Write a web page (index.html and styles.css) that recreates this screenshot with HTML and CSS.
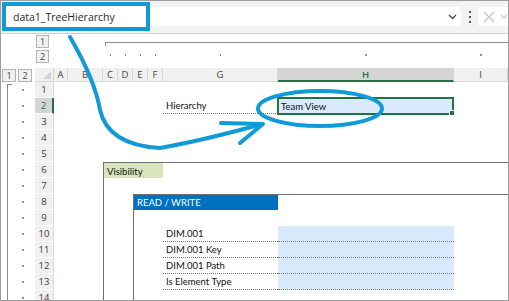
FILE: index.html
```html
<!DOCTYPE html>
<html>
<head>
<meta charset="utf-8">
<link rel="stylesheet" href="styles.css">
</head>
<body>
<div class="frame">
  <div class="topbar">
    <div class="namebox">data1_TreeHierarchy</div>
    <div class="formula">
      <svg class="chev" width="9" height="6" viewBox="0 0 9 6"><polyline points="1,1 4.5,4.5 8,1" fill="none" stroke="#444" stroke-width="1.3"/></svg>
    </div>
    <div class="vdots"><i></i><i></i><i></i></div>
    <div class="cancel">
      <svg width="12" height="12" viewBox="0 0 12 12"><path d="M1 1 L11 11 M11 1 L1 11" stroke="#c4c4c4" stroke-width="1.2"/></svg>
      <svg class="cv2" width="8" height="6" viewBox="0 0 8 6"><polyline points="1,1 4,4 7,1" fill="none" stroke="#c4c4c4" stroke-width="1.2"/></svg>
    </div>
  </div>

  <div class="sheet">
    <!-- outline row -->
    <div class="lvl-col"><span class="lvl">1</span><span class="lvl">2</span></div>
    <div class="col-bracket"></div>
    <div class="cdot c5"></div><div class="cdot c6"></div><div class="cdot c7"></div><div class="cdot c8"></div>
    <div class="cdot c9"></div><div class="cdot c10"></div><div class="cdot c11"></div>

    <!-- header row -->
    <div class="lvl-row"><span class="lvl">1</span><span class="lvl">2</span></div>
    <div class="corner"><span class="tri"></span></div>
    <div class="ch c3">A</div>
    <div class="ch c4">B</div>
    <div class="ch c5">C</div>
    <div class="ch c6">D</div>
    <div class="ch c7">E</div>
    <div class="ch c8">F</div>
    <div class="ch c9">G</div>
    <div class="ch c10 sel">H</div>
    <div class="ch c11">I</div>

    <!-- row outline -->
    <div class="row-bracket"></div>
    <div class="rdot r1"></div><div class="rdot r2"></div><div class="rdot r3"></div><div class="rdot r4"></div>
    <div class="rdot r5"></div><div class="rdot r6"></div><div class="rdot r7"></div><div class="rdot r8"></div>
    <div class="rdot r9"></div><div class="rdot r10"></div><div class="rdot r11"></div><div class="rdot r12"></div>
    <div class="rdot r13"></div><div class="rdot r14"></div>

    <!-- row headers -->
    <div class="rh r1">1</div>
    <div class="rh r2 sel">2</div>
    <div class="rh r3">3</div>
    <div class="rh r4">4</div>
    <div class="rh r5">5</div>
    <div class="rh r6">6</div>
    <div class="rh r7">7</div>
    <div class="rh r8">8</div>
    <div class="rh r9">9</div>
    <div class="rh r10">10</div>
    <div class="rh r11">11</div>
    <div class="rh r12">12</div>
    <div class="rh r13">13</div>
    <div class="rh r14">14</div>

    <!-- content -->
    <div class="cell lbl r2">Hierarchy</div>
    <div class="cell val active r2">Team View</div>

    <div class="box-outer"></div>
    <div class="cell vis">Visibility</div>

    <div class="box-inner"></div>
    <div class="cell rw">READ / WRITE</div>

    <div class="cell lbl r10">DIM.001</div>
    <div class="cell val r10"></div>
    <div class="cell lbl r11">DIM.001 Key</div>
    <div class="cell val r11"></div>
    <div class="cell lbl r12">DIM.001 Path</div>
    <div class="cell val r12"></div>
    <div class="cell lbl r13">Is Element Type</div>
    <div class="cell val r13"></div>
  </div>

  <svg class="annot" width="509" height="301" viewBox="0 0 509 301">
    <g fill="none" stroke="#119ad8" stroke-width="4" stroke-linecap="round" stroke-linejoin="round">
      <path d="M70 37 Q95 80 100 110 Q108 145 160 148 Q205 140 262 124"/>
      <polyline points="221,123 263,124 240,143"/>
      <ellipse cx="320" cy="108.5" rx="62" ry="17.5"/>
    </g>
  </svg>
</div>
</body>
</html>
```

FILE: styles.css
```css
html, body {
  margin: 0;
  padding: 0;
  background: #ffffff;
}

.frame {
  width: 509px;
  height: 301px;
  box-sizing: border-box;
  border: 1px solid #9d9d9d;
  position: relative;
  overflow: hidden;
  background: #ffffff;
  font-family: "Lato", "Liberation Sans", sans-serif;
}

/* ---------- formula bar ---------- */
.topbar {
  height: 33px;
  box-sizing: border-box;
  background: #f3f3f3;
  border-bottom: 1px solid #cfcfcf;
  display: flex;
  align-items: flex-start;
}

.namebox {
  margin: 1px 0 0 1px;
  width: 149px;
  height: 29px;
  box-sizing: border-box;
  border: 4px solid #119ad8;
  background: #ffffff;
  font-family: "Open Sans", "Liberation Sans", sans-serif;
  font-size: 10.5px;
  color: #2a2a2a;
  padding-left: 7px;
  display: flex;
  align-items: center;
}

.formula {
  margin: 6px 0 0 1px;
  width: 311px;
  height: 19px;
  background: #ffffff;
  border-radius: 3px;
  display: flex;
  align-items: center;
  justify-content: flex-end;
  padding-right: 4px;
  box-sizing: border-box;
}

.vdots {
  margin-top: 10px;
  width: 17px;
  height: 12px;
  display: flex;
  flex-direction: column;
  align-items: center;
  justify-content: space-between;
}
.vdots i {
  display: block;
  width: 2px;
  height: 2px;
  background: #555555;
}

.cancel {
  margin-top: 6px;
  flex: 1;
  height: 19px;
  background: #ffffff;
  border-radius: 3px 0 0 3px;
  display: flex;
  align-items: center;
  padding-left: 5px;
  gap: 5px;
}

/* ---------- sheet grid ---------- */
.sheet {
  display: grid;
  grid-template-columns: 34px 19px 14px 35px 15px 15px 15px 15px 115px 176px 1fr;
  grid-template-rows: 34px 14px repeat(14, 16px);
  font-size: 10px;
}

.c3 { grid-column: 3; }
.c4 { grid-column: 4; }
.c5 { grid-column: 5; }
.c6 { grid-column: 6; }
.c7 { grid-column: 7; }
.c8 { grid-column: 8; }
.c9 { grid-column: 9; }
.c10 { grid-column: 10; }
.c11 { grid-column: 11; }

.r1 { grid-row: 3; }
.r2 { grid-row: 4; }
.r3 { grid-row: 5; }
.r4 { grid-row: 6; }
.r5 { grid-row: 7; }
.r6 { grid-row: 8; }
.r7 { grid-row: 9; }
.r8 { grid-row: 10; }
.r9 { grid-row: 11; }
.r10 { grid-row: 12; }
.r11 { grid-row: 13; }
.r12 { grid-row: 14; }
.r13 { grid-row: 15; }
.r14 { grid-row: 16; }

/* outline level buttons */
.lvl {
  display: flex;
  align-items: center;
  justify-content: center;
  width: 13px;
  height: 13px;
  box-sizing: border-box;
  border: 1px solid #b4b4b4;
  background: #f1f1f1;
  font-family: "Open Sans", sans-serif;
  font-size: 9px;
  color: #444444;
}
.lvl-col {
  grid-column: 2;
  grid-row: 1;
  display: flex;
  flex-direction: column;
  gap: 2px;
  padding: 1px 0 0 1px;
}
.lvl-row {
  grid-column: 1;
  grid-row: 2;
  display: flex;
  gap: 2px;
  padding: 1px 0 0 1px;
}
.lvl-row .lvl { width: 14px; }

.col-bracket {
  grid-column: 5 / 12;
  grid-row: 1;
  margin: 8px 0 0 2px;
  height: 3px;
  border-top: 1px solid #8a8a8a;
  border-left: 1px solid #8a8a8a;
}

.cdot {
  grid-row: 1;
  display: flex;
  justify-content: center;
  padding-top: 20px;
}
.cdot::before, .rdot::before {
  content: "";
  width: 1.5px;
  height: 1.5px;
  background: #8f8f8f;
}

.row-bracket {
  grid-column: 1;
  grid-row: 3 / 17;
  margin: 2px 0 0 6px;
  width: 4px;
  border-left: 1px solid #8a8a8a;
  border-top: 1px solid #8a8a8a;
}
.rdot {
  grid-column: 1;
  display: flex;
  align-items: center;
  padding-left: 21px;
}

/* headers */
.corner {
  grid-column: 2;
  grid-row: 2;
  background: #f0f0f0;
  border-right: 1px solid #d8d8d8;
  border-bottom: 1px solid #d8d8d8;
  position: relative;
}
.tri {
  position: absolute;
  right: 2px;
  bottom: 2px;
  width: 0;
  height: 0;
  border-left: 8px solid transparent;
  border-bottom: 8px solid #d2d2d2;
}

.ch {
  grid-row: 2;
  background: #f0f0f0;
  border-right: 1px solid #d8d8d8;
  border-bottom: 1px solid #d8d8d8;
  display: flex;
  align-items: center;
  justify-content: center;
  font-family: "Open Sans", sans-serif;
  font-size: 9.5px;
  color: #444444;
}
.ch.sel {
  background: #d4d4d4;
  border-bottom: 2px solid #217346;
  color: #217346;
  font-weight: 600;
}

.rh {
  grid-column: 2;
  background: #f0f0f0;
  border-right: 1px solid #d8d8d8;
  border-bottom: 1px solid #ffffff;
  display: flex;
  align-items: center;
  justify-content: center;
  font-family: "Open Sans", sans-serif;
  font-size: 9.5px;
  color: #3a3a3a;
}
.rh.sel {
  background: #d4d4d4;
  border-right: 2px solid #217346;
  color: #217346;
}

/* cells */
.cell {
  display: flex;
  align-items: flex-end;
  padding: 0 0 2px 3px;
  box-sizing: border-box;
  font-size: 9.5px;
  color: #111111;
  white-space: nowrap;
  overflow: hidden;
}
.lbl {
  grid-column: 9;
  border-bottom: 1px dotted #7d7d7d;
}
.val {
  grid-column: 10;
  background: #d8eafb;
  border-bottom: 1px dotted #7d7d7d;
}
.val.active {
  border: 2px solid #217346;
  margin: -1px 0 -1px -1px;
  padding: 0 0 1px 2px;
  overflow: visible;
  position: relative;
}
.val.active::after {
  content: "";
  position: absolute;
  right: -3px;
  bottom: -3px;
  width: 4px;
  height: 4px;
  background: #217346;
  border: 1px solid #ffffff;
}

.box-outer {
  grid-column: 5 / 12;
  grid-row: 8 / 17;
  border-top: 1px solid #707070;
  border-left: 1px solid #707070;
}
.vis {
  grid-column: 5 / 9;
  grid-row: 8;
  margin: 1px 0 0 1px;
  background: #d8e4bc;
  padding-bottom: 1px;
}

.box-inner {
  grid-column: 7 / 12;
  grid-row: 10 / 17;
  border-top: 1px solid #707070;
  border-left: 1px solid #707070;
}
.rw {
  grid-column: 7 / 10;
  grid-row: 10;
  margin: 1px 0 0 1px;
  background: #0070c0;
  color: #ffffff;
  padding-bottom: 2px;
}

/* annotation overlay */
.annot {
  position: absolute;
  left: -1px;
  top: -1px;
  pointer-events: none;
}
```
